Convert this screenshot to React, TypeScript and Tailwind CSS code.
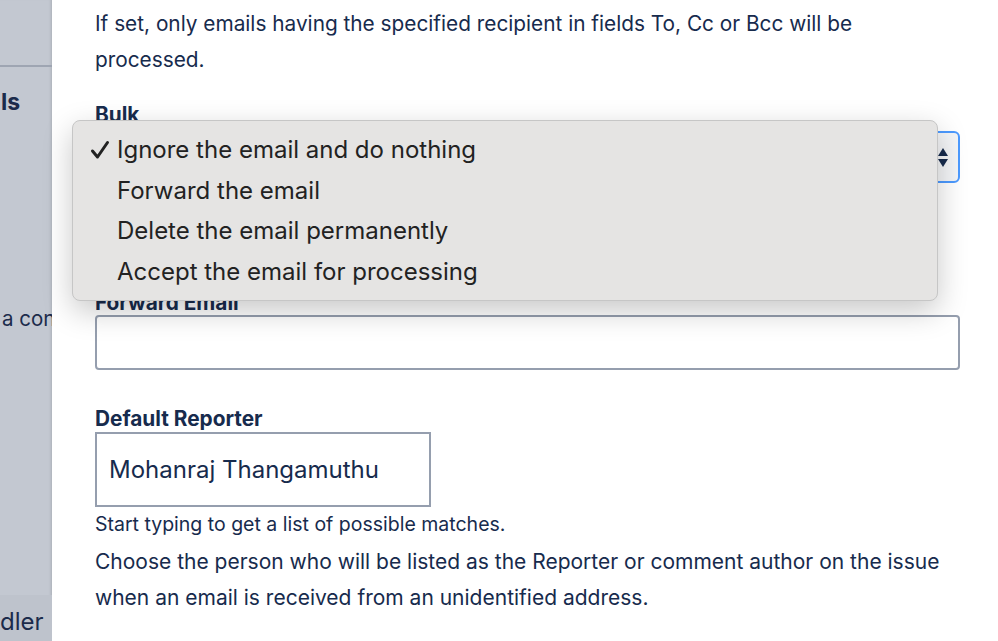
import React from "react";

const font = { fontFamily: "Inter, 'Noto Sans', sans-serif" };

export default function App() {
  return (
    <div className="flex h-[641px] w-[998px] overflow-hidden bg-white text-[#172b4d]" style={font}>
      {/* dimmed sidebar */}
      <div className="relative flex w-[52px] shrink-0 flex-col overflow-hidden bg-[#c3c8d1] shadow-[inset_-3px_0_3px_-2px_rgba(0,0,0,0.12)]">
        <div className="h-[67px] border-b-2 border-[#9ea5b2]" />
        <div className="mt-[20px] flex h-[30px] items-center overflow-hidden">
          <span className="whitespace-nowrap pl-[1px] text-[23px] font-bold text-[#1b2b4b]">ls</span>
        </div>
        <div className="mt-[188px] flex h-[28px] items-center overflow-hidden">
          <span className="whitespace-nowrap pl-[2px] text-[20.5px] text-[#1b2b4b]">a con</span>
        </div>
        <div className="mt-auto h-[46px] bg-[#bec3cc] pt-[12px]">
          <span className="block overflow-hidden whitespace-nowrap text-[24px] leading-[30px] text-[#1b2b4b]">dler</span>
        </div>
      </div>

      {/* main content */}
      <div className="relative flex-1 pl-[43px] pr-[38px]">
        <p className="pt-[6px] text-[20.8px] leading-[36px]">
          If set, only emails having the specified recipient in fields To, Cc or Bcc will be processed.
        </p>

        <div className="mt-[25px] text-[20.8px] font-bold leading-[24px]">Bulk</div>
        <div className="mt-[4px] flex h-[52px] items-center justify-end rounded-[6px] border-2 border-[#4c9aff] bg-[#f4f5f7] pr-[10px]">
          <svg width="10" height="21" viewBox="0 0 10 21">
            <path d="M5 1 L10 9 H0 Z" fill="#172b4d" />
            <path d="M5 20 L10 12 H0 Z" fill="#172b4d" />
          </svg>
        </div>

        <div className="mt-[108px] text-[20.8px] font-bold leading-[24px]">Forward Email</div>
        <div className="h-[55px] rounded-[4px] border-2 border-[#7a869a]/80" />

        <div className="mt-[37px] text-[20.8px] font-bold leading-[24px]">Default Reporter</div>
        <div className="mt-[1px] flex h-[75px] w-[336px] items-center border-2 border-[#7a869a]/80 pl-[12px] text-[24px]">
          Mohanraj Thangamuthu
        </div>
        <div className="mt-[5px] text-[19.5px] leading-[24px]">Start typing to get a list of possible matches.</div>
        <p className="mt-[8px] text-[21px] leading-[36px]">
          Choose the person who will be listed as the Reporter or comment author on the issue when an email is received from an unidentified address.
        </p>

        {/* native dropdown menu overlay */}
        <div className="absolute left-[20px] top-[120px] w-[866px] rounded-[8px] border border-[#c6c6c6] bg-[#e5e4e3] pt-[9px] pb-[8px] shadow-[0_10px_30px_rgba(0,0,0,0.22)]">
          {[
            "Ignore the email and do nothing",
            "Forward the email",
            "Delete the email permanently",
            "Accept the email for processing",
          ].map((t, i) => (
            <div key={t} className="flex h-[40.5px] items-center text-[24px] text-[#222222]">
              <span className="flex w-[44px] items-center pl-[17px]">
                {i === 0 && (
                  <svg width="20" height="20" viewBox="0 0 20 20">
                    <path d="M2.5 11 L7.5 17 L17.5 2.5" fill="none" stroke="#222222" strokeWidth="3" strokeLinecap="round" strokeLinejoin="round" />
                  </svg>
                )}
              </span>
              <span>{t}</span>
            </div>
          ))}
        </div>
      </div>
    </div>
  );
}
